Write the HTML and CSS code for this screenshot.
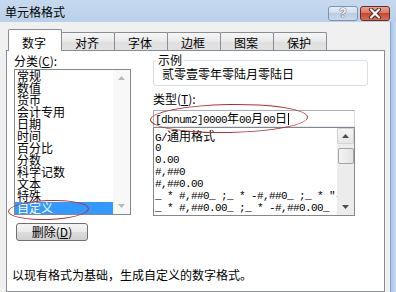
FILE: index.html
```html
<!DOCTYPE html>
<html>
<head>
<meta charset="utf-8">
<link rel="stylesheet" href="styles.css">
</head>
<body>
<div class="titlebar">
  <span class="title">单元格格式</span>
  <div class="caps">
    <div class="cap help">?</div>
    <div class="cap close">
      <svg width="14" height="11" viewBox="0 0 14 11">
        <path d="M3 1.5 L11 9.5 M11 1.5 L3 9.5" stroke="#5a2018" stroke-width="4" stroke-linecap="round"/>
        <path d="M3 1.5 L11 9.5 M11 1.5 L3 9.5" stroke="#ffffff" stroke-width="2.2" stroke-linecap="round"/>
      </svg>
    </div>
  </div>
</div>
<div class="frame">
  <div class="client">
    <div class="tabs">
      <div class="tab active">数字</div>
      <div class="tab">对齐</div>
      <div class="tab">字体</div>
      <div class="tab">边框</div>
      <div class="tab">图案</div>
      <div class="tab">保护</div>
    </div>
    <div class="panel">
      <div class="cols">
        <div class="left">
          <div class="lbl">分类(<u>C</u>):</div>
          <div class="listbox cat">
            <div class="items">
              <div class="item">常规</div>
              <div class="item">数值</div>
              <div class="item">货币</div>
              <div class="item">会计专用</div>
              <div class="item">日期</div>
              <div class="item">时间</div>
              <div class="item">百分比</div>
              <div class="item">分数</div>
              <div class="item">科学记数</div>
              <div class="item">文本</div>
              <div class="item">特殊</div>
              <div class="item sel">自定义</div>
            </div>
            <div class="vs vs-off">
              <div class="arrow"><svg width="7" height="4" viewBox="0 0 7 4"><path d="M0 4 L3.5 0 L7 4 Z" fill="#b8b8b8"/></svg></div>
              <div class="track"></div>
              <div class="arrow"><svg width="7" height="4" viewBox="0 0 7 4"><path d="M0 0 L3.5 4 L7 0 Z" fill="#b8b8b8"/></svg></div>
            </div>
          </div>
          <div class="btn">删除(<u>D</u>)</div>
          <div class="ellipse e1"></div>
        </div>
        <div class="right">
          <fieldset class="sample">
            <legend>示例</legend>
            <div class="sample-text">贰零壹零年零陆月零陆日</div>
          </fieldset>
          <div class="lbl lbl2">类型(<u>T</u>):</div>
          <div class="input"><span class="mono">[dbnum2]0000<span class="cj">年</span>00<span class="cj">月</span>00<span class="cj">日</span></span><span class="caret"></span></div>
          <div class="listbox fmt">
            <div class="items mono">
              <div class="fitem">G/<span class="cj">通用格式</span></div>
              <div class="fitem">0</div>
              <div class="fitem">0.00</div>
              <div class="fitem">#,##0</div>
              <div class="fitem">#,##0.00</div>
              <div class="fitem">_ * #,##0_ ;_ * -#,##0_ ;_ * "-"_ ;_ @_ </div>
              <div class="fitem">_ * #,##0.00_ ;_ * -#,##0.00_ ;_ * "-"??_ ;_ @_ </div>
            </div>
            <div class="vs vs-on">
              <div class="arrow up"><svg width="7" height="4" viewBox="0 0 7 4"><path d="M0 4 L3.5 0 L7 4 Z" fill="#4d4d4d"/></svg></div>
              <div class="track"><div class="thumb"></div></div>
              <div class="arrow"><svg width="7" height="4" viewBox="0 0 7 4"><path d="M0 0 L3.5 4 L7 0 Z" fill="#4d4d4d"/></svg></div>
            </div>
          </div>
          <div class="ellipse e2"></div>
        </div>
      </div>
      <p class="hint">以现有格式为基础，生成自定义的数字格式。</p>
    </div>
  </div>
  <div class="rframe"></div>
</div>
</body>
</html>
```

FILE: styles.css
```css
* { box-sizing: border-box; }
body {
  margin: 0;
  width: 396px;
  height: 292px;
  overflow: hidden;
  background: #f0f0f0;
  font-family: "Noto Sans CJK SC", sans-serif;
  font-size: 12px;
  color: #000;
}
.titlebar {
  height: 22px;
  display: flex;
  justify-content: space-between;
  align-items: flex-start;
  background: linear-gradient(#c6d9ee, #bad0e9);
}
.title {
  padding: 5px 0 0 5px;
  line-height: 14px;
}
.caps {
  display: flex;
  gap: 2px;
  margin: 6px 6px 0 0;
}
.cap {
  width: 30px;
  height: 15px;
  border: 1px solid #7d93b0;
  border-radius: 3px;
  display: flex;
  align-items: center;
  justify-content: center;
}
.help {
  background: linear-gradient(#e6eef8, #cfdcec 50%, #bccde3 50%, #c9d8ea);
  color: #fff;
  font-family: "Liberation Sans", sans-serif;
  font-weight: bold;
  font-size: 12px;
  line-height: 13px;
  text-shadow: 0 0 1px #334, 0 0 1px #334;
}
.close {
  border-color: #6e2a20;
  background: linear-gradient(#e8a493, #d7725f 50%, #c54a34 50%, #d4705a);
}
.frame {
  display: flex;
  height: 270px;
}
.client {
  flex: 1;
  padding: 7px 0 0 6px;
  display: flex;
  flex-direction: column;
}
.rframe {
  width: 6px;
  border-left: 1px solid #8aa6c6;
  background: linear-gradient(90deg, #a9c6e5, #c7dcf1);
}
.tabs {
  display: flex;
  align-items: flex-end;
  height: 22px;
  margin-bottom: -1px;
  padding-left: 2px;
  position: relative;
  z-index: 1;
}
.tab {
  width: 54px;
  height: 18px;
  margin-bottom: 1px;
  margin-right: -1px;
  border: 1px solid #898c95;
  border-bottom: none;
  border-radius: 2px 2px 0 0;
  background: linear-gradient(#f6f6f6, #e8e8e8 50%, #dedede 50%, #e2e2e2);
  padding: 3px 0 0 13px;
  line-height: 14px;
}
.tab.active {
  height: 22px;
  margin-bottom: 0;
  background: #fff;
  padding-top: 6px;
  position: relative;
  z-index: 2;
}
.panel {
  width: 379px;
  flex: 1;
  background: #fff;
  border: 1px solid #898c95;
  padding: 2px 0 0 7px;
}
.cols {
  display: flex;
  gap: 22px;
}
.left {
  width: 117px;
  position: relative;
}
.right {
  width: 215px;
  position: relative;
}
.lbl {
  line-height: 16px;
}
.listbox {
  display: flex;
  border: 1px solid #828790;
  background: #fff;
}
.cat {
  height: 146px;
}
.items {
  flex: 1;
  min-width: 0;
  overflow: hidden;
}
.item {
  height: 12px;
  line-height: 12px;
  padding-left: 2px;
  white-space: nowrap;
}
.item.sel {
  background: #3399ff;
  color: #fff;
}
.vs {
  width: 17px;
  display: flex;
  flex-direction: column;
}
.vs-off {
  background: #f8f8f8;
}
.vs-on {
  background: #ececec;
}
.arrow {
  height: 16px;
  display: flex;
  align-items: center;
  justify-content: center;
}
.arrow.up {
  background: linear-gradient(#f4f4f4, #e6e6e6);
  border: 1px solid #d2d2d2;
  border-radius: 2px;
}
.track {
  flex: 1;
  padding-top: 4px;
}
.thumb {
  height: 16px;
  margin: 0 0 0 1px;
  border: 1px solid #a3a3a3;
  border-radius: 2px;
  background: linear-gradient(90deg, #f4f4f4, #e3e3e3);
}
.btn {
  margin: 8px 0 0 2px;
  width: 72px;
  height: 18px;
  border: 1px solid #707070;
  border-radius: 3px;
  background: linear-gradient(#f4f4f4, #ebebeb 50%, #dddddd 50%, #d0d0d0);
  text-align: center;
  line-height: 16px;
}
.ellipse {
  position: absolute;
  border: 1.5px solid #b03434;
  border-radius: 50%;
}
.e1 {
  left: -6px;
  top: 147px;
  width: 81px;
  height: 20px;
  transform: rotate(-2deg);
}
.e2 {
  left: -3px;
  top: 51px;
  width: 158px;
  height: 29px;
  transform: rotate(-1deg);
}
.sample {
  margin: 0;
  padding: 0 8px 4px 8px;
  min-width: 0;
  width: 215px;
  border: 1px solid #d5dfe5;
  border-radius: 3px;
}
.sample legend {
  padding: 0 2px;
  margin-left: -6px;
  line-height: 14px;
}
.sample-text {
  line-height: 14px;
}
.lbl2 {
  margin-top: 6px;
  line-height: 14px;
}
.input {
  margin-top: 4px;
  width: 202px;
  height: 17px;
  border: 1px solid #abadb3;
  border-right-color: #dbdfe6;
  border-bottom-color: #e3e9ef;
  padding-left: 1px;
  line-height: 15px;
  white-space: nowrap;
  display: flex;
  align-items: center;
}
.caret {
  display: inline-block;
  width: 1px;
  height: 12px;
  background: #000;
  margin-left: 1px;
}
.mono {
  font-family: "Liberation Mono", monospace;
  font-size: 11px;
  letter-spacing: -0.6px;
}
.cj {
  font-family: "Noto Sans CJK SC", sans-serif;
  font-size: 12px;
  letter-spacing: 0;
}
.fmt {
  width: 202px;
  height: 89px;
}
.fmt .items {
  padding: 2px 0 0 1px;
}
.fitem {
  height: 12px;
  line-height: 12px;
  white-space: pre;
}
.hint {
  margin: 27px 0 0 -2px;
  line-height: 14px;
}
```
